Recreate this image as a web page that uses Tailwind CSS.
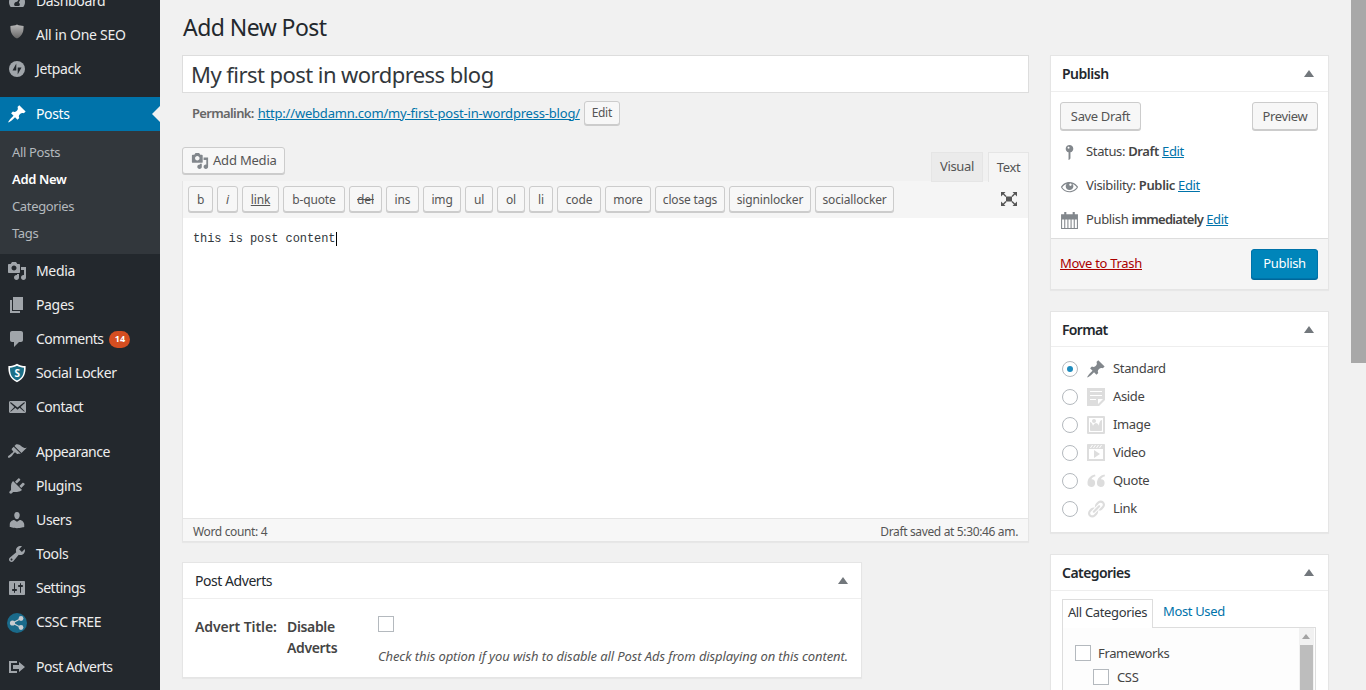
<!doctype html>
<html lang="en">
<head>
<meta charset="utf-8">
<title>Add New Post</title>
<script src="https://cdn.jsdelivr.net/npm/@tailwindcss/browser@4"></script>
</head>
<body class="m-0">
<div class="flex h-[690px] w-[1366px] overflow-hidden bg-[#f1f1f1] font-['Noto_Sans',sans-serif] text-[13px] tracking-[-0.35px] text-[#444]">

  <!-- admin menu -->
  <nav class="w-[160px] shrink-0 bg-[#23282d] text-[14px] text-[#eee]">
    <div class="-mt-[16px]">
      <div class="flex h-[34px] items-center"><svg class="ml-[7px] mr-[9px] h-5 w-5 fill-[#a0a5aa]" viewBox="0 0 20 20"><path d="M3.760 16h12.480c1.100-1.370 1.760-3.110 1.760-5 0-4.420-3.580-8-8-8s-8 3.580-8 8c0 1.890.66 3.630 1.760 5zM10 4c.55 0 1 .45 1 1s-.45 1-1 1-1-.45-1-1 .45-1 1-1zM6 6c.55 0 1 .45 1 1s-.45 1-1 1-1-.45-1-1 .45-1 1-1zm8.010 1l-2.130 4.510c.59.51.97 1.250.97 2.090 0 .8-.4 1.400-1 1.400H8.150c-.6 0-1-.6-1-1.400 0-1.570 1.280-2.850 2.850-2.850l.14.01L13 6.600z"/></svg><span class="pb-[2px]">Dashboard</span></div>
      <div class="flex h-[34px] items-center"><svg class="ml-[7px] mr-[9px] -mt-[7px] h-5 w-5" viewBox="0 0 20 20"><defs><linearGradient id="g" x1="0" y1="0" x2="0" y2="1"><stop offset="0" stop-color="#b8b8b8"/><stop offset="1" stop-color="#666"/></linearGradient></defs><path fill="url(#g)" d="M10 2.500c2.200 1 4.400 1.400 6.600 1.400 0 5-.6 9.600-6.600 12.600C4 13.500 3.400 8.900 3.400 3.900c2.200 0 4.400-.4 6.600-1.400z"/></svg><span class="pb-[2px] tracking-[-0.25px]">All in One SEO</span></div>
      <div class="flex h-[34px] items-center"><svg class="ml-[7px] mr-[9px] h-5 w-5" viewBox="0 0 20 20"><circle cx="10" cy="10" r="8" fill="#a0a5aa"/><path fill="#23282d" d="M9.300 4.500v7H5.500zM10.700 15.500v-7h3.800z"/></svg><span class="pb-[2px]">Jetpack</span></div>
    </div>

    <div class="relative mt-[11px] flex h-[34px] items-center bg-[#0073aa] text-white"><svg class="ml-[7px] mr-[9px] h-5 w-5 fill-white" viewBox="0 0 20 20"><path d="M10.440 3.020l1.820-1.820 6.360 6.350-1.830 1.820c-1.050-.68-2.480-.57-3.410.36l-.75.75c-.92.93-1.040 2.350-.35 3.410l-1.830 1.820-2.410-2.410-2.800 2.790c-.42.42-3.380 2.710-3.800 2.290s1.860-3.390 2.280-3.810l2.790-2.790L4.100 9.360l1.830-1.820c1.050.69 2.480.57 3.400-.36l.75-.75c.93-.92 1.050-2.350.36-3.410z"/></svg><span class="pb-[2px]">Posts</span><span class="absolute right-0 top-[9px] h-0 w-0 border-y-[8px] border-r-[8px] border-y-transparent border-r-[#f1f1f1]"></span></div>
    <div class="bg-[#32373c] pb-[7px] pt-[8px] text-[13px] text-[#b4b9be]">
      <div class="flex h-[27px] items-center pl-[12px]">All Posts</div>
      <div class="flex h-[27px] items-center pl-[12px] font-semibold text-white">Add New</div>
      <div class="flex h-[27px] items-center pl-[12px]">Categories</div>
      <div class="flex h-[27px] items-center pl-[12px]">Tags</div>
    </div>

    <div class="flex h-[34px] items-center"><svg class="ml-[7px] mr-[9px] h-5 w-5 fill-[#a0a5aa]" viewBox="0 0 20 20"><path d="M13 11V4c0-.55-.45-1-1-1h-1.670L9 1H5L3.670 3H2c-.55 0-1 .45-1 1v7c0 .55.45 1 1 1h10c.55 0 1-.45 1-1zM7 4.500c1.380 0 2.500 1.120 2.500 2.500S8.380 9.500 7 9.500 4.500 8.380 4.500 7 5.620 4.500 7 4.500zM14 6h5v10.500c0 1.380-1.120 2.500-2.500 2.500S14 17.880 14 16.500s1.120-2.500 2.500-2.500c.17 0 .34.02.5.05V9h-3V6zm-4 8.050V13h2v3.500c0 1.380-1.120 2.500-2.500 2.500S7 17.880 7 16.500 8.120 14 9.500 14c.17 0 .34.02.5.05z"/></svg><span class="pb-[2px]">Media</span></div>
    <div class="flex h-[34px] items-center"><svg class="ml-[7px] mr-[9px] h-5 w-5 fill-[#a0a5aa]" viewBox="0 0 20 20"><path d="M6 15V2h10v13H6zm-1 1h8v2H3V5h2v11z"/></svg><span class="pb-[2px]">Pages</span></div>
    <div class="flex h-[34px] items-center"><svg class="ml-[7px] mr-[9px] h-5 w-5 fill-[#a0a5aa]" viewBox="0 0 20 20"><path d="M5 2h9c1.100 0 2 .9 2 2v7c0 1.100-.9 2-2 2h-2l-5 5v-5H5c-1.100 0-2-.9-2-2V4c0-1.100.9-2 2-2z"/></svg><span class="pb-[2px] tracking-[-0.55px]">Comments</span><span class="ml-[6px] flex h-[17px] w-[21px] items-center justify-center rounded-full bg-[#d54e21] text-[9px] font-bold tracking-normal text-white">14</span></div>
    <div class="flex h-[34px] items-center"><svg class="ml-[7px] mr-[9px] h-5 w-5" viewBox="0 0 20 20"><path fill="#fff" d="M10 .8c2.600 1.600 5.200 2.300 8.600 2.300.4 7-1.400 13-8.600 16.100C2.800 16.100 1 10.100 1.400 3.100 4.800 3.100 7.400 2.400 10 .8z"/><path fill="#1b6f87" d="M10 2.800c2.200 1.200 4.400 1.800 7 1.900.1 5.600-1.500 10.500-7 12.800C4.500 15.200 2.900 10.300 3 4.700c2.600-.1 4.800-.7 7-1.900z"/><text x="10" y="13.500" text-anchor="middle" font-size="10" font-weight="700" fill="#fff" font-family="Noto Sans">S</text></svg><span class="pb-[2px]">Social Locker</span></div>
    <div class="flex h-[34px] items-center"><svg class="ml-[7px] mr-[9px] h-5 w-5 fill-[#a0a5aa]" viewBox="0 0 20 20"><path d="M19 14.500v-9c0-.83-.67-1.500-1.500-1.500H3.490c-.83 0-1.500.67-1.500 1.500v9c0 .83.67 1.500 1.500 1.500H17.500c.83 0 1.500-.67 1.500-1.500zm-1.310-9.110c.33.33.15.67-.03.84L13.600 9.950l3.900 4.060c.12.14.2.36.06.51-.13.16-.43.15-.56.05l-4.370-3.730-2.140 1.950-2.130-1.950-4.370 3.730c-.13.1-.43.11-.56-.05-.14-.15-.06-.37.06-.51l3.900-4.060-4.060-3.720c-.18-.17-.36-.51-.03-.84s.67-.17.95.07l6.240 5.040 6.250-5.040c.28-.24.62-.4.95-.07z"/></svg><span class="pb-[2px] tracking-[-0.5px]">Contact</span></div>

    <div class="mt-[11px] flex h-[34px] items-center"><svg class="ml-[7px] mr-[9px] h-5 w-5 fill-[#a0a5aa]" viewBox="0 0 20 20"><path d="M14.480 11.060L7.410 3.990l1.500-1.500c.5-.56 2.300-.47 3.510.32 1.210.8 1.430 1.280 2.910 2.100 1.180.64 2.450 1.260 4.450.85zm-.71.71L6.700 4.700 4.930 6.470c-.39.39-.39 1.020 0 1.410l1.060 1.060c.39.39.39 1.030 0 1.420-.6.6-1.430 1.110-2.210 1.690-.35.26-.7.53-1.010.84C1.430 13.230.4 14.890 1.100 15.590c.7.7 2.360-.33 3.700-1.670.31-.31.58-.66.84-1.010.58-.78 1.090-1.610 1.690-2.210.39-.39 1.020-.39 1.410 0l1.060 1.060c.39.39 1.020.39 1.410 0z"/></svg><span class="pb-[2px] tracking-[-0.45px]">Appearance</span></div>
    <div class="flex h-[34px] items-center"><svg class="ml-[7px] mr-[9px] h-5 w-5 fill-[#a0a5aa]" viewBox="0 0 20 20"><path d="M13.110 4.360L9.870 7.600 8 5.730l3.240-3.240c.35-.34 1.050-.2 1.560.32.52.51.66 1.210.31 1.550zm-8 1.770l.91-1.120 9.010 9.010-1.190.84c-.71.71-2.630 1.160-3.820 1.160H6.140L4.900 17.260c-.59.59-1.540.59-2.120 0-.59-.58-.59-1.530 0-2.120l1.240-1.240v-3.880c0-1.130.4-3.190 1.090-3.890zm7.260 3.970l3.240-3.240c.34-.35 1.040-.21 1.550.31.52.51.66 1.210.31 1.550l-3.240 3.250z"/></svg><span class="pb-[2px]">Plugins</span></div>
    <div class="flex h-[34px] items-center"><svg class="ml-[7px] mr-[9px] h-5 w-5 fill-[#a0a5aa]" viewBox="0 0 20 20"><path d="M10 9.250c-2.270 0-2.730-3.440-2.730-3.440C7 4.020 7.820 2 9.970 2c2.160 0 2.980 2.020 2.710 3.810 0 0-.41 3.440-2.680 3.440zm0 2.570L12.720 10c2.390 0 4.520 2.330 4.520 4.530v2.490s-3.650 1.130-7.240 1.130c-3.650 0-7.240-1.130-7.240-1.130v-2.490c0-2.250 1.940-4.480 4.470-4.480z"/></svg><span class="pb-[2px]">Users</span></div>
    <div class="flex h-[34px] items-center"><svg class="ml-[7px] mr-[9px] h-5 w-5 fill-[#a0a5aa]" viewBox="0 0 20 20"><path d="M16.680 9.770c-1.340 1.340-3.300 1.670-4.950.99l-5.410 6.520c-.99.99-2.590.99-3.580 0s-.99-2.590 0-3.570l6.520-5.420c-.68-1.650-.35-3.610.99-4.950 1.280-1.280 3.120-1.620 4.720-1.060l-2.890 2.890 2.820 2.820 2.860-2.870c.53 1.580.18 3.390-1.080 4.650zM3.810 16.210c.4.39 1.040.39 1.430 0 .4-.4.4-1.040 0-1.430-.39-.4-1.030-.4-1.430 0-.39.39-.39 1.030 0 1.430z"/></svg><span class="pb-[2px]">Tools</span></div>
    <div class="flex h-[34px] items-center"><svg class="ml-[7px] mr-[9px] h-5 w-5 fill-[#a0a5aa]" viewBox="0 0 20 20"><path d="M18 16V4c0-.55-.45-1-1-1H3c-.55 0-1 .45-1 1v12c0 .55.45 1 1 1h14c.55 0 1-.45 1-1zM8 11h1c.55 0 1 .45 1 1s-.45 1-1 1H8v1.500c0 .28-.22.5-.5.5s-.5-.22-.5-.5V13H6c-.55 0-1-.45-1-1s.45-1 1-1h1V5.500c0-.28.22-.5.5-.5s.5.22.5.5V11zm5-2h-1c-.55 0-1-.45-1-1s.45-1 1-1h1V5.500c0-.28.22-.5.5-.5s.5.22.5.5V7h1c.55 0 1 .45 1 1s-.45 1-1 1h-1v5.500c0 .28-.22.5-.5.5s-.5-.22-.5-.5V9z"/></svg><span class="pb-[2px] tracking-[-0.5px]">Settings</span></div>
    <div class="flex h-[34px] items-center"><svg class="ml-[7px] mr-[9px] mt-[1px] h-5 w-5" viewBox="0 0 20 20"><circle cx="10" cy="10" r="10" fill="#1a6a8a"/><g fill="#c8ccd0"><circle cx="5.500" cy="10" r="2.600"/><circle cx="14" cy="5.500" r="2.400"/><circle cx="14" cy="14.500" r="2.400"/></g><path stroke="#c8ccd0" stroke-width="1.300" d="M5.500 10L14 5.500M5.500 10L14 14.500"/></svg><span class="pb-[2px]">CSSC FREE</span></div>

    <div class="mt-[11px] flex h-[34px] items-center"><svg class="ml-[7px] mr-[9px] h-5 w-5 fill-[#a0a5aa]" viewBox="0 0 20 20"><path d="M4 6h6V4H2v12.010h8V14H4V6zm2 2h6V5l6 5-6 5v-3H6V8z"/></svg><span class="pb-[2px] tracking-[-0.5px]">Post Adverts</span></div>
  </nav>

  <!-- content -->
  <main class="flex min-w-0 flex-1">
    <!-- left column -->
    <div class="ml-[22px] w-[847px] shrink-0">
      <h1 class="flex h-[55px] items-center pb-[1px] pl-[1px] text-[23px] font-normal tracking-[-0.55px] text-[#23282d]">Add New Post</h1>
      <div class="flex h-[38px] items-center border border-[#ddd] bg-white pl-[8px] text-[22px] tracking-[-0.55px] text-[#32373c]">My first post in wordpress blog</div>

      <div class="mt-[7px] flex h-[25px] items-center pl-[10px] text-[#666]">
        <span class="pt-[2px] font-semibold tracking-[-0.65px]">Permalink:</span>
        <a class="ml-[4px] pt-[2px] tracking-[-0.2px] text-[#0073aa] underline">http://webdamn.com/my-first-post-in-wordpress-blog/</a>
        <span class="ml-[4px] flex h-[24px] w-[36px] items-center justify-center rounded-[3px] border border-[#ccc] bg-[#f7f7f7] pt-[1px] text-[12px] tracking-[-0.3px] text-[#555] shadow-[0_1px_0_#ccc]">Edit</span>
      </div>

      <div class="mt-[22px] flex h-[34px] items-start justify-between">
        <span class="flex h-[27px] w-[103px] items-center rounded-[3px] border border-[#ccc] bg-[#f7f7f7] pl-[8px] tracking-[-0.2px] text-[#555] shadow-[0_1px_0_#ccc]"><svg class="mr-[4px] h-[18px] w-[18px] fill-[#82878c]" viewBox="0 0 20 20"><path d="M13 11V4c0-.55-.45-1-1-1h-1.670L9 1H5L3.670 3H2c-.55 0-1 .45-1 1v7c0 .55.45 1 1 1h10c.55 0 1-.45 1-1zM7 4.500c1.380 0 2.500 1.120 2.500 2.500S8.380 9.500 7 9.500 4.500 8.380 4.500 7 5.620 4.500 7 4.500zM14 6h5v10.500c0 1.380-1.120 2.500-2.500 2.500S14 17.880 14 16.500s1.120-2.500 2.500-2.500c.17 0 .34.02.5.05V9h-3V6zm-4 8.050V13h2v3.500c0 1.380-1.120 2.500-2.500 2.500S7 17.880 7 16.500 8.120 14 9.500 14c.17 0 .34.02.5.05z"/></svg>Add Media</span>
        <div class="mt-[5px] flex gap-[5px]">
          <span class="flex h-[30px] w-[52px] items-center justify-center border border-[#e5e5e5] bg-[#ebebeb] text-[#555]">Visual</span>
          <span class="flex h-[30px] w-[41px] items-center justify-center border border-b-0 border-[#e5e5e5] bg-[#f5f5f5] text-[#555]">Text</span>
        </div>
      </div>

      <div class="flex h-[37px] items-start gap-[4px] border border-y-0 border-[#e5e5e5] border-b-[#ddd] bg-[#f5f5f5] pl-[5px] pt-[5px] text-[12px] tracking-[-0.15px] text-[#555]">
        <span class="flex h-[26px] w-[25px] items-center justify-center rounded-[3px] border border-[#ccc] bg-[#f7f7f7] pt-[2px] shadow-[0_1px_0_#ccc]">b</span>
        <span class="flex h-[26px] w-[21px] items-center justify-center rounded-[3px] border border-[#ccc] bg-[#f7f7f7] pt-[2px] italic shadow-[0_1px_0_#ccc]">i</span>
        <span class="flex h-[26px] w-[37px] items-center justify-center rounded-[3px] border border-[#ccc] bg-[#f7f7f7] pt-[2px] underline shadow-[0_1px_0_#ccc]">link</span>
        <span class="flex h-[26px] w-[62px] items-center justify-center rounded-[3px] border border-[#ccc] bg-[#f7f7f7] pt-[2px] shadow-[0_1px_0_#ccc]">b-quote</span>
        <span class="flex h-[26px] w-[33px] items-center justify-center rounded-[3px] border border-[#ccc] bg-[#f7f7f7] pt-[2px] line-through shadow-[0_1px_0_#ccc]">del</span>
        <span class="flex h-[26px] w-[33px] items-center justify-center rounded-[3px] border border-[#ccc] bg-[#f7f7f7] pt-[2px] shadow-[0_1px_0_#ccc]">ins</span>
        <span class="flex h-[26px] w-[38px] items-center justify-center rounded-[3px] border border-[#ccc] bg-[#f7f7f7] pt-[2px] shadow-[0_1px_0_#ccc]">img</span>
        <span class="flex h-[26px] w-[28px] items-center justify-center rounded-[3px] border border-[#ccc] bg-[#f7f7f7] pt-[2px] shadow-[0_1px_0_#ccc]">ul</span>
        <span class="flex h-[26px] w-[28px] items-center justify-center rounded-[3px] border border-[#ccc] bg-[#f7f7f7] pt-[2px] shadow-[0_1px_0_#ccc]">ol</span>
        <span class="flex h-[26px] w-[24px] items-center justify-center rounded-[3px] border border-[#ccc] bg-[#f7f7f7] pt-[2px] shadow-[0_1px_0_#ccc]">li</span>
        <span class="flex h-[26px] w-[44px] items-center justify-center rounded-[3px] border border-[#ccc] bg-[#f7f7f7] pt-[2px] shadow-[0_1px_0_#ccc]">code</span>
        <span class="flex h-[26px] w-[46px] items-center justify-center rounded-[3px] border border-[#ccc] bg-[#f7f7f7] pt-[2px] shadow-[0_1px_0_#ccc]">more</span>
        <span class="flex h-[26px] w-[70px] items-center justify-center rounded-[3px] border border-[#ccc] bg-[#f7f7f7] pt-[2px] shadow-[0_1px_0_#ccc]">close tags</span>
        <span class="flex h-[26px] w-[82px] items-center justify-center rounded-[3px] border border-[#ccc] bg-[#f7f7f7] pt-[2px] shadow-[0_1px_0_#ccc]">signinlocker</span>
        <span class="flex h-[26px] w-[79px] items-center justify-center rounded-[3px] border border-[#ccc] bg-[#f7f7f7] pt-[2px] shadow-[0_1px_0_#ccc]">sociallocker</span>
        <svg class="ml-auto mr-[10px] mt-[5px] h-[16px] w-[18px] fill-[#555]" viewBox="0 0 18 16"><rect x="6" y="5.500" width="6" height="5"/><path d="M1 1h4.500L4 2.600 6.500 5 5.500 6 3 3.500 1 5.500zM17 1h-4.500L14 2.600 11.500 5l1 1L15 3.500l2 2zM1 15h4.500L4 13.400 6.500 11l-1-1L3 12.500l-2-2zM17 15h-4.500l1.500-1.600L11.500 11l1-1 2.500 2.500 2-2z"/></svg>
      </div>

      <div class="h-[300px] border border-y-0 border-[#e5e5e5] bg-white pl-[10px] pt-[12px] font-['Liberation_Mono',monospace] text-[12px] leading-[18px] tracking-[-0.08px] text-[#32373c]"><span class="border-r border-black pr-[1px]">this is post content</span></div>

      <div class="flex h-[24px] items-center justify-between border border-[#e5e5e5] bg-[#f7f7f7] px-[10px] pt-[3px] text-[12px] text-[#555] shadow-[0_1px_1px_rgba(0,0,0,0.04)]">
        <span>Word count: 4</span><span>Draft saved at 5:30:46 am.</span>
      </div>

      <section class="mt-[20px] h-[116px] w-[680px] border border-[#e5e5e5] bg-white shadow-[0_1px_1px_rgba(0,0,0,0.04)]">
        <div class="flex h-[36px] items-center justify-between border-b border-[#eee] pl-[12px] pr-[13px] text-[14px] tracking-[-0.45px] text-[#23282d]"><span>Post Adverts</span><span class="h-0 w-0 border-x-[5px] border-b-[7px] border-x-transparent border-b-[#72777c]"></span></div>
        <div class="flex pl-[12px]">
          <div class="mt-[17px] w-[92px] text-[14px] font-semibold leading-[21px] tracking-[-0.1px]">Advert Title:</div>
          <div class="mt-[17px] w-[91px] text-[14px] font-semibold leading-[21px]">Disable<br>Adverts</div>
          <div class="pt-[17px]">
            <div class="h-[16px] w-[16px] border border-[#b4b9be] bg-white"></div>
            <p class="mt-[15px] whitespace-nowrap text-[13px] italic tracking-[-0.1px] text-[#555]">Check this option if you wish to disable all Post Ads from displaying on this content.</p>
          </div>
        </div>
      </section>
    </div>

    <!-- right column -->
    <aside class="ml-[21px] mt-[55px] w-[279px] shrink-0">
      <section class="h-[235px] border border-[#e5e5e5] bg-white shadow-[0_1px_1px_rgba(0,0,0,0.04)]">
        <div class="flex h-[36px] items-center justify-between border-b border-[#eee] pl-[11px] pr-[14px] text-[14px] font-semibold tracking-[-0.5px] text-[#23282d]"><span>Publish</span><span class="h-0 w-0 border-x-[5px] border-b-[7px] border-x-transparent border-b-[#72777c]"></span></div>
        <div class="flex justify-between pl-[9px] pr-[10px] pt-[10px] text-[#555]">
          <span class="flex h-[28px] w-[81px] items-center justify-center rounded-[3px] border border-[#ccc] bg-[#f7f7f7] pt-[2px] shadow-[0_1px_0_#ccc]">Save Draft</span>
          <span class="flex h-[28px] w-[66px] items-center justify-center rounded-[3px] border border-[#ccc] bg-[#f7f7f7] pt-[2px] shadow-[0_1px_0_#ccc]">Preview</span>
        </div>
        <div class="mt-[5px] flex h-[34px] items-center pl-[9px]"><svg class="mr-[7px] h-[19px] w-[19px] fill-[#82878c]" viewBox="0 0 20 20"><path d="M14 6c0 1.860-1.280 3.410-3 3.860V16c0 1-2 2-2 2V9.860c-1.720-.45-3-2-3-3.860 0-2.210 1.790-4 4-4s4 1.790 4 4zM8 5c0 .55.45 1 1 1s1-.45 1-1-.45-1-1-1-1 .45-1 1z"/></svg><span>Status: <b class="font-semibold">Draft</b> <a class="text-[#0073aa] underline">Edit</a></span></div>
        <div class="flex h-[34px] items-center pl-[9px]"><svg class="mr-[7px] h-[19px] w-[19px] fill-[#82878c]" viewBox="0 0 20 20"><path d="M18.300 9.500C15 4.900 8.500 3.800 3.900 7.200c-1.200.9-2.200 2.100-3 3.400.2.4.5.8.8 1.200 3.300 4.600 9.600 5.600 14.200 2.400.9-.7 1.700-1.400 2.400-2.400.3-.4.5-.8.8-1.200-.3-.4-.5-.8-.8-1.100zm-8.200-2.300c.5-.5 1.300-.5 1.800 0s.5 1.300 0 1.800-1.300.5-1.800 0c-.5-.4-.5-1.300 0-1.800zm-.1 7.700c-3.100 0-6-1.600-7.700-4.200C3.500 9 5.100 7.800 7 7c-.7.8-1 1.700-1 2.700 0 2.200 1.700 4.100 4 4.100 2.200 0 4.100-1.700 4.100-4 0-1-.4-2-1.100-2.700 1.900.8 3.500 2 4.700 3.800-1.700 2.600-4.600 4.200-7.700 4z"/></svg><span>Visibility: <b class="font-semibold">Public</b> <a class="text-[#0073aa] underline">Edit</a></span></div>
        <div class="flex h-[34px] items-center pl-[9px]"><svg class="mr-[7px] h-[19px] w-[19px] fill-[#82878c]" viewBox="0 0 18 18"><path d="M1 3h3V1h2v2h6V1h2v2h3v14H1zm1 5v8h2V8zm3 0v8h2V8zm3 0v8h2V8zm3 0v8h2V8zm3 0v8h2V8z" fill-rule="evenodd"/></svg><span>Publish <b class="font-semibold tracking-[-0.7px]">immediately</b> <a class="text-[#0073aa] underline">Edit</a></span></div>
        <div class="mt-[1px] flex h-[51px] items-start justify-between border-t border-[#ddd] bg-[#f5f5f5] pl-[9px] pr-[10px] pt-[10px]">
          <a class="mt-[5px] tracking-[-0.3px] text-[#a00] underline">Move to Trash</a>
          <span class="flex h-[30px] w-[67px] items-center justify-center rounded-[3px] border border-[#0073aa] bg-[#0085ba] text-white shadow-[0_1px_0_#006799]">Publish</span>
        </div>
      </section>

      <section class="mt-[21px] h-[222px] border border-[#e5e5e5] bg-white shadow-[0_1px_1px_rgba(0,0,0,0.04)]">
        <div class="flex h-[35px] items-center justify-between border-b border-[#eee] pl-[11px] pr-[14px] text-[14px] font-semibold tracking-[-0.7px] text-[#23282d]"><span>Format</span><span class="h-0 w-0 border-x-[5px] border-b-[7px] border-x-transparent border-b-[#72777c]"></span></div>
        <div class="pl-[11px] pt-[8px]">
          <div class="flex h-[28px] items-center"><span class="mr-[8px] flex h-[16px] w-[16px] items-center justify-center rounded-full border border-[#b4b9be] bg-white"><span class="h-[6px] w-[6px] rounded-full bg-[#1e8cbe]"></span></span><svg class="mr-[7px] h-[20px] w-[20px] fill-[#82878c]" viewBox="0 0 20 20"><path d="M10.440 3.020l1.820-1.820 6.360 6.350-1.830 1.820c-1.050-.68-2.480-.57-3.410.36l-.75.75c-.92.93-1.040 2.350-.35 3.410l-1.830 1.820-2.410-2.410-2.800 2.790c-.42.42-3.380 2.710-3.800 2.290s1.860-3.390 2.280-3.810l2.790-2.790L4.100 9.360l1.830-1.820c1.050.69 2.480.57 3.400-.36l.75-.75c.93-.92 1.050-2.350.36-3.410z"/></svg><span>Standard</span></div>
          <div class="flex h-[28px] items-center"><span class="mr-[8px] h-[16px] w-[16px] rounded-full border border-[#b4b9be] bg-white"></span><svg class="mr-[7px] h-[20px] w-[20px] fill-[#ddd]" viewBox="0 0 20 20"><path d="M1 1h18v12l-6 6H1V1zm3 3v1h12V4H4zm0 4v1h12V8H4zm6 5v-1H4v1h6zm2 4l5-5h-5v5z"/></svg><span>Aside</span></div>
          <div class="flex h-[28px] items-center"><span class="mr-[8px] h-[16px] w-[16px] rounded-full border border-[#b4b9be] bg-white"></span><svg class="mr-[7px] h-[20px] w-[20px] fill-[#ddd]" viewBox="0 0 20 20"><path d="M2.250 1h15.500c.69 0 1.250.56 1.250 1.250v15.500c0 .69-.56 1.250-1.250 1.250H2.250C1.560 19 1 18.440 1 17.750V2.250C1 1.560 1.560 1 2.250 1zM17 17V3H3v14h14zM10 6c0-1.100-.9-2-2-2s-2 .9-2 2 .9 2 2 2 2-.9 2-2zm3 5s0-6 3-6v10c0 .55-.45 1-1 1H5c-.55 0-1-.45-1-1V7c2 0 3 4 3 4s1-3 3-3 3 3 3 3z"/></svg><span>Image</span></div>
          <div class="flex h-[28px] items-center"><span class="mr-[8px] h-[16px] w-[16px] rounded-full border border-[#b4b9be] bg-white"></span><svg class="mr-[7px] h-[20px] w-[20px] fill-[#ddd]" viewBox="0 0 20 20"><path d="M2 1h16c.55 0 1 .45 1 1v16l-18-.02V2c0-.55.45-1 1-1zm4 1L4 5h1l2-3H6zm4 0H9L7 5h1zm3 0h-1l-2 3h1zm3 0h-1l-2 3h1zm1 14V6H3v10h14zM8 7l6 4-6 4V7z"/></svg><span>Video</span></div>
          <div class="flex h-[28px] items-center"><span class="mr-[8px] h-[16px] w-[16px] rounded-full border border-[#b4b9be] bg-white"></span><svg class="mr-[7px] h-[20px] w-[20px] fill-[#ddd]" viewBox="0 0 20 20"><path d="M9 3.500C4.500 4.500 1.500 7.500 1.500 12a3.800 3.800 0 1 0 4-3.700C5.800 7 7.200 5.800 9.500 5.300zM18.500 3.500C14 4.500 11 7.500 11 12a3.800 3.800 0 1 0 4-3.700C15.300 7 16.700 5.800 19 5.300z"/></svg><span>Quote</span></div>
          <div class="flex h-[28px] items-center"><span class="mr-[8px] h-[16px] w-[16px] rounded-full border border-[#b4b9be] bg-white"></span><svg class="mr-[7px] h-[20px] w-[20px] fill-[#ddd]" viewBox="0 0 20 20"><path d="M17.740 2.760c1.680 1.690 1.680 4.410 0 6.100l-1.530 1.520c-1.120 1.120-2.700 1.470-4.140 1.090l2.620-2.610.76-.77.76-.76c.84-.84.84-2.200 0-3.040-.84-.85-2.200-.85-3.040 0l-.77.76-3.380 3.380c-.37-1.440-.02-3.020 1.100-4.140l1.520-1.530c1.690-1.680 4.420-1.680 6.100 0zM8.590 13.430l5.340-5.340c.42-.42.42-1.100 0-1.520-.44-.43-1.130-.39-1.530 0l-5.330 5.340c-.42.42-.42 1.100 0 1.520.44.43 1.130.39 1.520 0zm-.76 2.290l4.140-4.150c.38 1.440.03 3.020-1.090 4.140l-1.520 1.530c-1.690 1.680-4.410 1.680-6.100 0-1.680-1.680-1.680-4.420 0-6.100l1.530-1.520c1.120-1.120 2.700-1.470 4.140-1.100l-4.140 4.150c-.85.84-.85 2.200 0 3.050.84.84 2.200.84 3.040 0z"/></svg><span>Link</span></div>
        </div>
      </section>

      <section class="mt-[21px] h-[200px] border border-[#e5e5e5] bg-white shadow-[0_1px_1px_rgba(0,0,0,0.04)]">
        <div class="flex h-[36px] items-center justify-between border-b border-[#eee] pl-[11px] pr-[14px] text-[14px] font-semibold tracking-[-0.55px] text-[#23282d]"><span>Categories</span><span class="h-0 w-0 border-x-[5px] border-b-[7px] border-x-transparent border-b-[#72777c]"></span></div>
        <div class="ml-[11px] mt-[8px] flex h-[28px] w-[254px]">
          <span class="relative z-10 flex h-[29px] w-[91px] items-center justify-center border border-b-0 border-[#ddd] bg-white pb-[2px] text-[#32373c]">All Categories</span>
          <a class="ml-[10px] flex items-center pb-[2px] text-[#0073aa]">Most Used</a>
        </div>
        <div class="relative ml-[11px] h-[100px] w-[254px] border border-[#ddd] bg-[#fdfdfd]">
          <div class="flex pl-[12px] pt-[17px]"><span class="mr-[7px] h-[16px] w-[16px] border border-[#b4b9be] bg-white"></span><span class="leading-[16px]">Frameworks</span></div>
          <div class="flex pl-[30px] pt-[8px]"><span class="mr-[8px] h-[16px] w-[16px] border border-[#b4b9be] bg-white"></span><span class="leading-[16px]">CSS</span></div>
          <div class="absolute right-[1px] top-0 h-full w-[15px] bg-[#f1f1f1]">
            <span class="absolute left-[3px] top-[6px] h-0 w-0 border-x-[4px] border-b-[5px] border-x-transparent border-b-[#a3a3a3]"></span>
            <span class="absolute left-[1px] top-[17px] h-[80px] w-[13px] bg-[#bdbdbd]"></span>
          </div>
        </div>
      </section>
    </aside>

    <!-- page scrollbar -->
    <div class="ml-auto w-[15px] shrink-0 bg-[#f1f1f1]"><div class="h-[363px] bg-[#a8a8a8]"></div></div>
  </main>
</div>
</body>
</html>
